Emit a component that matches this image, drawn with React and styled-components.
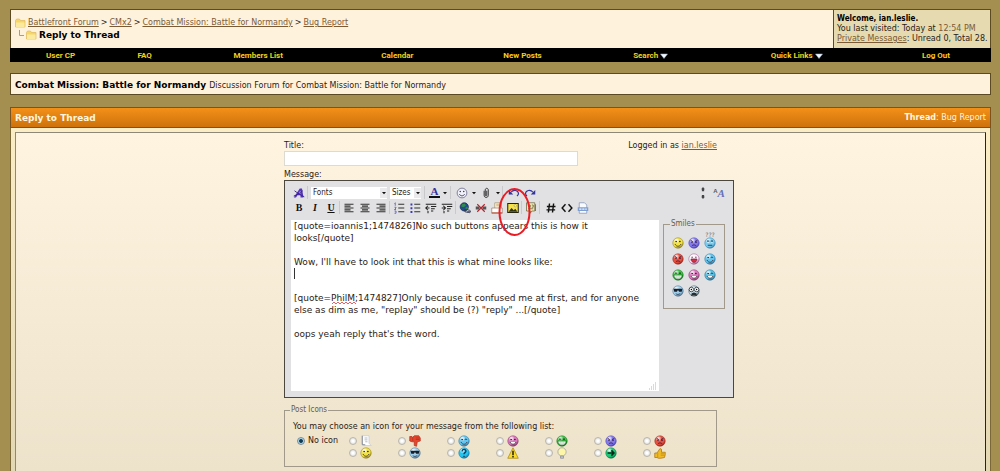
import React from "react";
import styled, { createGlobalStyle } from "styled-components";

const sans = '"DejaVu Sans", Verdana, sans-serif';
const condensed = '"DejaVu Sans Condensed", "DejaVu Sans", sans-serif';

const GlobalStyle = createGlobalStyle`
  * {
    box-sizing: border-box;
  }
  body {
    background: #a58f50;
    color: #2b2115;
    font-family: ${sans};
    font-size: 8px;
    line-height: 10px;
    margin: 0;
  }
  button,
  input,
  select,
  textarea {
    color: inherit;
    font-family: inherit;
    font-size: inherit;
    margin: 0;
  }
`;

const Page = styled.div`
  display: flex;
  flex-direction: column;
  min-height: 100vh;
  padding: 9px 9px 0 10px;
`;

const Header = styled.header`
  background: #fff2dc;
  border: 1px solid #5b4a22;
  border-bottom: 0;
  display: flex;
  height: 39px;
  justify-content: space-between;
`;

const Crumbs = styled.nav`
  padding: 7px 4px;
`;

const CrumbRow = styled.div`
  align-items: center;
  display: flex;
  gap: 2px;
  height: 12px;
`;

const Link = styled.a`
  color: #7b5b35;
  text-decoration: underline;
`;

const Heading = styled.h1`
  color: #000;
  font-size: 9px;
  line-height: 12px;
  margin: 0;
`;

const Welcome = styled.div`
  background: #e5dab0;
  border-left: 1px solid #5b4a22;
  flex: none;
  padding: 4px 0 0 3px;
  white-space: nowrap;
  width: 157px;
`;

const WelcomeName = styled.strong`
  color: #000;
  display: block;
  font-family: ${condensed};
`;

const Time = styled.span`
  color: #7b5b35;
`;

const NavBar = styled.nav`
  background: #000;
  display: grid;
  grid-template-columns: 101fr 67fr 160fr 118fr 132fr 124fr 168fr 110fr;
  height: 14px;
`;

const NavLink = styled.a`
  align-items: center;
  color: #f5cf1a;
  display: flex;
  font-family: Roboto, sans-serif;
  font-weight: 700;
  gap: 2px;
  justify-content: center;
  padding-top: 1px;
  text-decoration: none;
`;

const ForumBox = styled.section`
  align-items: baseline;
  background: #fff2dc;
  border: 1px solid #5b4a22;
  display: flex;
  gap: 3px;
  height: 22px;
  margin: 11px 0 12px;
  padding: 5px 4px 0;
`;

const TitleBar = styled.div`
  align-items: center;
  background: linear-gradient(#f39019, #ce720c);
  border: 1px solid #7a5320;
  color: #fff6df;
  display: flex;
  height: 21px;
  justify-content: space-between;
  padding: 0 4px;
`;

const BarTitle = styled.h2`
  font-size: 9px;
  margin: 0;
`;

const Panel = styled.main`
  background: linear-gradient(#fbedc6, #e3d8b4);
  border: 1px solid #7a6838;
  border-bottom: 0;
  border-top: 0;
  display: flex;
  flex: 1;
  flex-direction: column;
  padding: 4px 4px 0;
`;

const PanelInner = styled.div`
  background: linear-gradient(#fff4e0, #ede2ca);
  border: 1px solid #8d8878;
  border-bottom: 0;
  border-right: 1px solid #2c2415;
  flex: 1;
  padding-top: 8px;
`;

const Form = styled.form`
  margin: 0 auto;
  width: 433px;
`;

const FormTop = styled.div`
  display: flex;
  justify-content: space-between;
`;

const Label = styled.label`
  display: block;
`;

const TitleInput = styled.input`
  background: #fff;
  border: 1px solid #dcdad2;
  display: block;
  height: 15px;
  margin-bottom: 4px;
  width: 294px;
`;

const Editor = styled.div`
  background: #e1e1e3;
  border: 1px solid #4b463e;
  padding: 4px 6px 6px;
  position: relative;
  width: 450px;
`;

const ToolRow = styled.div`
  align-items: center;
  display: flex;
  height: 15px;
`;

const ToolButton = styled.button`
  align-items: center;
  background: none;
  border: 0;
  display: flex;
  height: 15px;
  justify-content: center;
  padding: 0;
  width: ${({ $popup }) => ($popup ? 24 : 16)}px;
`;

const Separator = styled.span`
  background: #c9c9cc;
  flex: none;
  height: 13px;
  margin-right: ${({ $wide }) => ($wide ? 3 : 1)}px;
  width: 1px;
`;

const SelectBox = styled.span`
  align-items: center;
  background: #fff;
  display: flex;
  height: 12px;
  margin-right: 3px;
  width: ${({ $width }) => $width}px;
`;

const Select = styled.select`
  appearance: none;
  background: none;
  border: 0;
  flex: 1;
  font-family: ${condensed};
  min-width: 0;
  outline: 0;
  padding: 0 2px;
`;

const SelectArrow = styled.span`
  align-items: center;
  background: #eaeaec;
  display: flex;
  height: 10px;
  justify-content: center;
  width: 7px;
`;

const ToolsRight = styled.div`
  display: flex;
  margin-left: auto;
`;

const EditArea = styled.div`
  align-items: flex-start;
  display: flex;
  gap: 4px;
  margin-top: 5px;
`;

const MessageWrap = styled.div`
  height: 171px;
  position: relative;
  width: 368px;
`;

const Message = styled.textarea`
  background: #fff;
  border: 0;
  display: block;
  font-size: 9px;
  height: 100%;
  line-height: 12px;
  outline: 0;
  overflow: hidden;
  padding: 0 3px;
  resize: none;
  width: 100%;
`;

const Caret = styled.span`
  background: #333;
  height: 11px;
  left: 3px;
  position: absolute;
  top: 48px;
  width: 1px;
`;

const Squiggle = styled.svg`
  left: 41px;
  position: absolute;
  top: 82px;
`;

const Grip = styled.svg`
  bottom: 1px;
  position: absolute;
  right: 2px;
`;

const Marker = styled.svg`
  left: 213px;
  pointer-events: none;
  position: absolute;
  top: 6px;
`;

const Fieldset = styled.fieldset`
  border: 1px solid #a19a8a;
  margin: 0;
  min-width: 0;
`;

const SmilieSet = styled(Fieldset)`
  height: 90px;
  margin-top: -1px;
  padding: 6px 6px 0;
  width: 62px;
`;

const Legend = styled.legend`
  color: #6b5c45;
  font-family: ${condensed};
  line-height: 10px;
  padding: 0 1px;
`;

const PostLegend = styled(Legend)`
  margin-left: -3px;
`;

const SmilieGrid = styled.div`
  display: grid;
  grid-auto-rows: 16px;
  grid-template-columns: repeat(3, 16px);
`;

const SmilieButton = styled.button`
  align-items: center;
  background: none;
  border: 0;
  display: flex;
  justify-content: center;
  padding: 0;
`;

const PostIcons = styled(Fieldset)`
  height: 62px;
  margin-top: 7px;
  padding: 7px 8px 0;
`;

const IconChoices = styled.div`
  display: grid;
  grid-template-columns: 56px 1fr;
  margin-top: 3px;
`;

const IconGrid = styled.div`
  display: grid;
  grid-auto-rows: 12px;
  grid-template-columns: repeat(7, 49px);
`;

const Choice = styled.label`
  align-items: center;
  display: flex;
  gap: 3px;
  height: 12px;
  padding-left: ${({ $first }) => ($first ? 4 : 0)}px;
`;

const Radio = styled.input`
  appearance: none;
  background: radial-gradient(circle, #fff 20%, #d2d2d0 100%);
  border: 1px solid #b9b6ad;
  border-radius: 50%;
  flex: none;
  height: 8px;
  width: 8px;
  &:checked {
    background: radial-gradient(circle, #123a52 35%, #a8d8ee 55%);
    border-color: #7d8c96;
  }
`;

const FolderIcon = () => (
    <svg width="11" height="10" viewBox="0 0 11 10">
        <path d="M.5 2.5 1.5 1h3l1 1.5h4.5v6.5H.5z" fill="#f6d766" stroke="#e0b95c" strokeWidth=".7" />
        <path d="M1 4.5h8.5V9H1z" fill="#fbe9a0" />
    </svg>
);

const BranchIcon = () => (
    <svg width="9" height="10" viewBox="0 0 9 10">
        <path d="M4.5 0v5.5H9" fill="none" stroke="#a79c86" />
    </svg>
);

const Arrow = () => (
    <svg width="4" height="4" viewBox="0 0 4 4">
        <path d="M0 1h4L2 3.3z" fill="#111" />
    </svg>
);

const MenuArrow = () => (
    <svg width="8" height="6" viewBox="0 0 8 6">
        <path d="M.5 1h7L4 5.5z" fill="#f2f8ff" stroke="#9fb6d0" strokeWidth=".5" />
    </svg>
);

const faces = {
    smile: ["#f2e342", "#93851a"],
    mad: ["#e8503e", "#a02a20"],
    confused: ["#8379ee", "#5048b4"],
    rolleyes: ["#7bcdf0", "#3a88b2"],
    tongue: ["#f9f0f6", "#a15a92"],
    wink: ["#62c6f0", "#2c7ca8"],
    biggrin: ["#3cc444", "#1a7a23"],
    embarrassed: ["#dc77be", "#8c3a72"],
    eek: ["#55c0e4", "#2c7494"],
    cool: ["#a0d0ec", "#4f7390"],
    nerd: ["#c6dae4", "#4d6068"],
    question: ["#22c4f0", "#137ba9"],
    arrow: ["#1cc878", "#0a7a48"],
};

const Features = ({ type }) => {
    if (type === "question") {
        return <path d="M5.5 6c0-4 5.5-3.5 5 0-.2 1.5-2.5 1.7-2.5 3.5M8 11.5v1.7" fill="none" stroke="#123955" strokeWidth="1.8" />;
    }
    if (type === "arrow") {
        return <path d="M3.5 8h8M8.5 4.5 12 8l-3.5 3.5" fill="none" stroke="#032b17" strokeWidth="2" />;
    }
    if (type === "cool") {
        return (
            <>
                <path d="M2 5h12l-1 4H9.5L8 6.5 6.5 9H3z" fill="#16202d" />
                <path d="M5 11.5c2 1.5 4 1.5 6-.5" fill="none" stroke="#203347" />
            </>
        );
    }
    if (type === "nerd") {
        return (
            <>
                <circle cx="4.5" cy="6" r="3" fill="#fff" stroke="#182027" />
                <circle cx="11.5" cy="6" r="3" fill="#fff" stroke="#182027" />
                <circle cx="4.5" cy="6" r="1" />
                <circle cx="11.5" cy="6" r="1" />
                <path d="M5 11l3-1 3 1 1 3.5-3-1H7l-3 1z" fill="#252d31" />
            </>
        );
    }
    if (type === "mad" || type === "confused") {
        return (
            <>
                <path d="m3.5 4.5 3 1.5M12.5 4.5 9.5 6M5 12c1.5-2 4.5-2 6 0" fill="none" stroke="#35183f" strokeWidth="1.1" />
                <circle cx="5.3" cy="7" r="1" fill="#251030" />
                <circle cx="10.7" cy="7" r="1" fill="#251030" />
            </>
        );
    }
    if (type === "biggrin") {
        return (
            <>
                <path d="M2.5 8h11c0 7.5-11 7.5-11 0z" fill="#fff" stroke="#115018" strokeWidth=".8" />
                <path d="M5.5 8.5v4M8 8.5v5M10.5 8.5v4" stroke="#4c9a54" strokeWidth=".6" />
                <path d="M4 5.5h3M9 5.5h3" stroke="#092f0e" strokeWidth="1.3" />
            </>
        );
    }
    if (type === "tongue") {
        return (
            <>
                <path d="M4 8h8c0 6-8 6-8 0z" fill="#d82e3f" stroke="#7f1c46" />
                <circle cx="5.5" cy="5.5" r="1" fill="#714061" />
                <circle cx="10.5" cy="5.5" r="1" fill="#714061" />
            </>
        );
    }
    if (type === "rolleyes") {
        return (
            <>
                <path d="M4 5.5h3M9 5.5h3M5 11h6" stroke="#164864" strokeWidth="1.4" />
                <path d="M4.5 7h2M9.5 7h2" stroke="#fff" />
            </>
        );
    }
    return (
        <>
            <circle cx="5.5" cy="6" r="1.1" fill="#221827" />
            {type === "wink" || type === "eek" ? (
                <path d="M9 6.5c1-1.5 2-1.5 3 0" fill="none" stroke="#102f45" strokeWidth="1.2" />
            ) : (
                <circle cx="10.5" cy="6" r="1.1" fill="#221827" />
            )}
            <path
                d="M4 9.3c1.5 4 6.5 4 8 0"
                fill={type === "eek" || type === "embarrassed" ? "#fff" : "none"}
                stroke="#40303c"
                strokeWidth="1.1"
            />
        </>
    );
};

const Face = ({ type }) => {
    const id = `${React.useId()}${type}`;
    const [fill, edge] = faces[type];

    return (
        <svg width="12" height="12" viewBox="0 0 16 16">
            <defs>
                <radialGradient id={id} cx="35%" cy="25%" r="75%">
                    <stop offset="0" stopColor="#fff" />
                    <stop offset=".4" stopColor={fill} />
                    <stop offset=".75" stopColor={fill} />
                    <stop offset="1" stopColor={edge} />
                </radialGradient>
            </defs>
            <circle cx="8" cy="8" r="7" fill={`url(#${id})`} stroke={edge} strokeWidth=".7" />
            <Features type={type} />
        </svg>
    );
};

const Dots = styled.span`
  color: #6b6f76;
  font-size: 6px;
  line-height: 4px;
  position: absolute;
  top: -4px;
`;

const DottedFace = styled.span`
  display: flex;
  justify-content: center;
  position: relative;
`;

const PostIcon = ({ type }) => {
    if (type === "page") {
        return (
            <svg width="12" height="12" viewBox="0 0 16 16">
                <path d="M3 1h9v10l3 3H6L3 12z" fill="#fff" stroke="#c8cad1" />
                <path d="M3 1v12h4" fill="none" stroke="#7b8392" strokeWidth="1.2" />
                <path d="M6 4h4M6 6.5h4M7 9h3" stroke="#9da5b3" />
            </svg>
        );
    }
    if (type === "down" || type === "up") {
        return (
            <svg width="12" height="12" viewBox="0 0 16 16">
                <path
                    d={
                        type === "down"
                            ? "M1 2h3l1 1 2-2h6l2 3v4l-4 1-1 6-3-1V9H4L1 8z"
                            : "M1 8h3l4-6 2 1v4h5v3l-1 4-5 1H6l-2-1H1z"
                    }
                    fill={type === "down" ? "#e4472e" : "#f0ba25"}
                    stroke={type === "down" ? "#b8341f" : "#aa7614"}
                />
                <path
                    d={type === "down" ? "M9 4h5M9 6h5M5 3v5" : "M9 9h5M9 11h5M5 8v6"}
                    stroke={type === "down" ? "#a62c1d" : "#b68014"}
                    strokeWidth=".8"
                />
            </svg>
        );
    }
    if (type === "warning") {
        return (
            <svg width="12" height="12" viewBox="0 0 16 16">
                <path d="m8 1 7 14H1z" fill="#fbdc28" stroke="#aa8912" strokeLinejoin="round" />
                <path d="M8 5v6M8 12v2" stroke="#251e06" strokeWidth="2" />
            </svg>
        );
    }
    if (type === "bulb") {
        return (
            <svg width="12" height="12" viewBox="0 0 16 16">
                <circle cx="8" cy="6.5" r="5.5" fill="#fdf6a8" stroke="#a9a9a4" strokeWidth="1.2" />
                <path d="M6 12h4v3H6z" fill="#c3c5cc" stroke="#8d8e99" />
            </svg>
        );
    }
    return <Face type={type} />;
};

// toolbar glyphs share a 16 unit grid
const glyphs = {
    removeFormat: (
        <>
            <path d="m1 14 8-12h3l2 12h-4v-3H6l-2 3zM7.5 8.5H10L9.8 5z" fill="#5636c0" fillRule="evenodd" />
            <path d="M2 5c4 3 8 6 13 8M13 5C9 8 5 11 1 12" fill="none" stroke="#352080" strokeWidth="1.2" />
        </>
    ),
    left: <path d="M2 3h12M2 5.5h8M2 8h12M2 10.5h8M2 13h12" stroke="#333" strokeWidth="1.4" />,
    center: <path d="M2 3h12M4 5.5h8M2 8h12M4 10.5h8M2 13h12" stroke="#333" strokeWidth="1.4" />,
    right: <path d="M2 3h12M6 5.5h8M2 8h12M6 10.5h8M2 13h12" stroke="#333" strokeWidth="1.4" />,
    numbered: (
        <>
            <path d="M3 1v4M2 2l1-1M2 7h2v1L2 10h2M2 12h2v3H2" fill="none" stroke="#4a4ab8" />
            <path d="M7 3h8M7 8h8M7 13h8" stroke="#333" strokeWidth="1.4" />
        </>
    ),
    bullets: (
        <>
            <path d="M2 2h2.5v2.5H2zM2 7h2.5v2.5H2zM2 12h2.5v2.5H2z" fill="#3939b4" />
            <path d="M7 3h8M7 8h8M7 13h8" stroke="#333" strokeWidth="1.4" />
        </>
    ),
    outdent: (
        <>
            <path d="M1 3h14M8 6h7M8 9h5M8 12h3M4 12v3" stroke="#222" strokeWidth="1.4" />
            <path d="M1 8h5M4 5 1 8l3 3" fill="none" stroke="#222" strokeWidth="1.4" />
        </>
    ),
    indent: (
        <>
            <path d="M1 3h14M8 6h7M8 9h5M8 12h3M4 12v3" stroke="#222" strokeWidth="1.4" />
            <path d="M1 8h5M3 5l3 3-3 3" fill="none" stroke="#222" strokeWidth="1.4" />
        </>
    ),
    link: (
        <>
            <circle cx="7" cy="6.5" r="5.5" fill="#1f4f8e" stroke="#172a52" />
            <path d="M4 3l4-1 1 3-3 2-3-1zM8 8l3-2 1 2-2 3z" fill="#308c49" />
            <path d="M7 11h3M11 13h4M8 13c-2-2 0-4 2-3l4 1c3 1 1 4-1 3z" fill="none" stroke="#333c55" strokeWidth="1.3" />
        </>
    ),
    unlink: (
        <>
            <path d="M1 8h5M10 8h5" stroke="#555" strokeWidth="4" />
            <path d="m3 3 10 10M13 3 3 13" stroke="#b3242b" strokeWidth="1.5" />
        </>
    ),
    email: (
        <>
            <path d="M5 1h9v9H5z" fill="#fbf3d7" stroke="#a99673" />
            <path d="M1 8h14v7H1z" fill="#fff" stroke="#a1816b" />
            <path d="M1 14.5h14" stroke="#b25c42" strokeWidth="1.5" />
            <path d="M7 3h5M7 5h5" stroke="#c79d65" />
        </>
    ),
    image: (
        <>
            <path d="M1 2h14v12H1z" fill="#f6e34c" stroke="#252510" strokeWidth="1.4" />
            <path d="m2 13 4-5 3 3 2-2 3 4z" fill="#2d3214" />
            <circle cx="11" cy="5" r="1.5" fill="#fff" stroke="#7b7521" strokeWidth=".6" />
        </>
    ),
    quote: (
        <>
            <path d="M2 1h11v11H9l-2 3v-3H2z" fill="#f4ecaf" stroke="#6b6342" />
            <path d="M5 4h2v3H5M9 4h2v3H9M4 9h7M14 3v9" fill="none" stroke="#5f593b" />
        </>
    ),
    hash: <path d="M6 2 4.5 14M11.5 2 10 14M2.5 6H14M2 10.5h11.5" stroke="#111" strokeWidth="1.9" />,
    code: <path d="M6 3 1.5 8 6 13M10 3l4.5 5-4.5 5" fill="none" stroke="#111" strokeWidth="1.9" />,
    php: (
        <>
            <path d="M3 1h7l3 3v11H3z" fill="#f8fbff" stroke="#8294b8" />
            <path d="M1 7h14v5H1z" fill="#7e9fcf" />
            <path d="M3 9.5h10" stroke="#eff5ff" strokeDasharray="3 1" strokeWidth="1.6" />
        </>
    ),
    smilie: (
        <>
            <circle cx="8" cy="8" r="6.5" fill="#f0f0f8" stroke="#747493" strokeWidth="1.2" />
            <circle cx="5.7" cy="6" r="1" fill="#33335c" />
            <circle cx="10.3" cy="6" r="1" fill="#33335c" />
            <path d="M4.5 9.5c1.5 3 5.5 3 7 0" fill="none" stroke="#33335c" strokeWidth="1.2" />
        </>
    ),
    clip: <path d="M5.5 5v6c0 4 5.5 4 5.5 0V4c0-3-4-3-4 0v7c0 1.5 2 1.5 2 0V5" fill="none" stroke="#333" strokeWidth="1.3" />,
    undo: (
        <>
            <path d="M4 7c3-4 10-3 10 2 0 1-1 2-2 3" fill="none" stroke="#3434a0" strokeWidth="1.5" />
            <path d="M1 4v6h6z" fill="#3434a0" />
        </>
    ),
    redo: (
        <>
            <path d="M12 7C9 3 2 4 2 9c0 1 1 2 2 3" fill="none" stroke="#3434a0" strokeWidth="1.5" />
            <path d="M15 4v6H9z" fill="#3434a0" />
        </>
    ),
    resize: <path d="M8 0l2.5 3h-5zM6.5 3h3v2.5h-3zM8 16l2.5-3h-5zM6.5 10.5h3V13h-3z" fill="#444" />,
};

const Glyph = ({ name }) => (
    <svg width="12" height="12" viewBox="0 0 16 16">
        {glyphs[name]}
    </svg>
);

const Letter = styled.span`
  color: #111;
  font-family: "Liberation Serif", serif;
  font-size: 10px;
  font-style: ${({ $italic }) => ($italic ? "italic" : "normal")};
  font-weight: 700;
  text-decoration: ${({ $underline }) => ($underline ? "underline" : "none")};
`;

const ColourLetter = styled.span`
  border-bottom: 2px solid #111;
  color: #33339c;
  font-family: "Liberation Serif", serif;
  font-size: 11px;
  font-weight: 700;
  line-height: 9px;
  margin-right: 3px;
  padding: 0 2px;
`;

const ModeLetters = styled.span`
  align-items: flex-start;
  color: #555;
  display: flex;
  font-family: "Liberation Sans", sans-serif;
  font-size: 6px;
  font-weight: 700;
  line-height: 8px;
`;

const ModeBig = styled.span`
  color: #6870b8;
  font-family: "Liberation Serif", serif;
  font-size: 11px;
  font-style: italic;
  line-height: 12px;
`;

const Spacer = styled.span`
  width: 4px;
`;

const Tool = ({ name, label, popup }) => (
    <ToolButton type="button" aria-label={label || name} $popup={popup}>
        <Glyph name={name} />
        {popup && (
            <>
                <Spacer />
                <Arrow />
            </>
        )}
    </ToolButton>
);

const smilies = [
    "smile",
    "confused",
    "rolleyes",
    "mad",
    "tongue",
    "wink",
    "biggrin",
    "embarrassed",
    "eek",
    "cool",
    "nerd",
];

const postIcons = [
    "page",
    "down",
    "wink",
    "embarrassed",
    "biggrin",
    "confused",
    "mad",
    "smile",
    "cool",
    "question",
    "warning",
    "bulb",
    "arrow",
    "up",
];

const message = `[quote=ioannis1;1474826]No such buttons appears this is how it
looks[/quote]

Wow, I'll have to look int that this is what mine looks like:


[quote=PhilM;1474827]Only because it confused me at first, and for anyone
else as dim as me, "replay" should be (?) "reply" ...[/quote]

oops yeah reply that's the word.`;

const Toolbar = () => (
    <>
        <ToolRow>
            <Tool name="removeFormat" label="Remove formatting" />
            <Separator $wide />
            <SelectBox $width={76}>
                <Select aria-label="Fonts">
                    <option>Fonts</option>
                </Select>
                <SelectArrow>
                    <Arrow />
                </SelectArrow>
            </SelectBox>
            <SelectBox $width={31}>
                <Select aria-label="Sizes">
                    <option>Sizes</option>
                </Select>
                <SelectArrow>
                    <Arrow />
                </SelectArrow>
            </SelectBox>
            <Separator />
            <ToolButton type="button" aria-label="Text colour" $popup>
                <ColourLetter>A</ColourLetter>
                <Arrow />
            </ToolButton>
            <Separator $wide />
            <Tool name="smilie" popup />
            <Tool name="clip" label="Attachments" popup />
            <Separator $wide />
            <Tool name="undo" />
            <Tool name="redo" />
            <ToolsRight>
                <Tool name="resize" label="Resize editor" />
                <ToolButton type="button" aria-label="Switch editor mode">
                    <ModeLetters>
                        A<ModeBig>A</ModeBig>
                    </ModeLetters>
                </ToolButton>
            </ToolsRight>
        </ToolRow>
        <ToolRow>
            <ToolButton type="button" aria-label="Bold">
                <Letter>B</Letter>
            </ToolButton>
            <ToolButton type="button" aria-label="Italic">
                <Letter $italic>I</Letter>
            </ToolButton>
            <ToolButton type="button" aria-label="Underline">
                <Letter $underline>U</Letter>
            </ToolButton>
            <Separator />
            <Tool name="left" />
            <Tool name="center" />
            <Tool name="right" />
            <Separator />
            <Tool name="numbered" />
            <Tool name="bullets" />
            <Tool name="outdent" />
            <Tool name="indent" />
            <Separator />
            <Tool name="link" />
            <Tool name="unlink" />
            <Tool name="email" />
            <Tool name="image" />
            <Separator />
            <Tool name="quote" />
            <Separator $wide />
            <Tool name="hash" />
            <Tool name="code" />
            <Tool name="php" />
        </ToolRow>
    </>
);

const App = () => (
    <Page>
        <GlobalStyle />
        <Header>
            <Crumbs>
                <CrumbRow>
                    <FolderIcon />
                    <Link href="#forum">Battlefront Forum</Link>&gt;
                    <Link href="#cmx2">CMx2</Link>&gt;
                    <Link href="#normandy">Combat Mission: Battle for Normandy</Link>&gt;
                    <Link href="#bugs">Bug Report</Link>
                </CrumbRow>
                <CrumbRow>
                    <BranchIcon />
                    <FolderIcon />
                    <Heading>Reply to Thread</Heading>
                </CrumbRow>
            </Crumbs>
            <Welcome>
                <WelcomeName>Welcome, ian.leslie.</WelcomeName>
                You last visited: Today at <Time>12:54 PM</Time>
                <br />
                <Link href="#messages">Private Messages</Link>: Unread 0, Total 28.
            </Welcome>
        </Header>
        <NavBar>
            <NavLink href="#usercp">User CP</NavLink>
            <NavLink href="#faq">FAQ</NavLink>
            <NavLink href="#members">Members List</NavLink>
            <NavLink href="#calendar">Calendar</NavLink>
            <NavLink href="#new">New Posts</NavLink>
            <NavLink href="#search">
                Search <MenuArrow />
            </NavLink>
            <NavLink href="#links">
                Quick Links <MenuArrow />
            </NavLink>
            <NavLink href="#logout">Log Out</NavLink>
        </NavBar>
        <ForumBox>
            <Heading as="h2">Combat Mission: Battle for Normandy</Heading>
            <span>Discussion Forum for Combat Mission: Battle for Normandy</span>
        </ForumBox>
        <TitleBar>
            <BarTitle>Reply to Thread</BarTitle>
            <span>
                <b>Thread</b>: Bug Report
            </span>
        </TitleBar>
        <Panel>
            <PanelInner>
                <Form>
                    <FormTop>
                        <Label htmlFor="title">Title:</Label>
                        <span>
                            Logged in as <Link href="#profile">ian.leslie</Link>
                        </span>
                    </FormTop>
                    <TitleInput id="title" type="text" />
                    <Label htmlFor="message">Message:</Label>
                    <Editor>
                        <Toolbar />
                        <EditArea>
                            <MessageWrap>
                                <Message id="message" spellCheck={false} defaultValue={message} />
                                <Caret />
                                <Squiggle width="26" height="3" viewBox="0 0 26 3">
                                    <path
                                        d="M0 2l2-2 2 2 2-2 2 2 2-2 2 2 2-2 2 2 2-2 2 2 2-2 2 2"
                                        fill="none"
                                        stroke="#e23b3b"
                                        strokeWidth=".8"
                                    />
                                </Squiggle>
                                <Grip width="8" height="8" viewBox="0 0 8 8">
                                    <path
                                        d="M6 1h1M4 3h1M6 3h1M2 5h1M4 5h1M6 5h1M0 7h1M2 7h1M4 7h1M6 7h1"
                                        stroke="#b5b5b5"
                                    />
                                </Grip>
                            </MessageWrap>
                            <SmilieSet>
                                <Legend>Smiles</Legend>
                                <SmilieGrid>
                                    {smilies.map((type) => (
                                        <SmilieButton key={type} type="button" aria-label={type}>
                                            <DottedFace>
                                                {type === "rolleyes" && <Dots>???</Dots>}
                                                <Face type={type} />
                                            </DottedFace>
                                        </SmilieButton>
                                    ))}
                                </SmilieGrid>
                            </SmilieSet>
                        </EditArea>
                        <Marker width="33" height="50" viewBox="0 0 33 50">
                            <ellipse cx="16.5" cy="25" rx="15" ry="23" fill="none" stroke="#ea1c24" strokeWidth="2" />
                        </Marker>
                    </Editor>
                    <PostIcons>
                        <PostLegend>Post Icons</PostLegend>
                        You may choose an icon for your message from the following list:
                        <IconChoices>
                            <Choice $first>
                                <Radio type="radio" name="icon" defaultChecked />
                                No icon
                            </Choice>
                            <IconGrid>
                                {postIcons.map((type) => (
                                    <Choice key={type}>
                                        <Radio type="radio" name="icon" aria-label={type} />
                                        <PostIcon type={type} />
                                    </Choice>
                                ))}
                            </IconGrid>
                        </IconChoices>
                    </PostIcons>
                </Form>
            </PanelInner>
        </Panel>
    </Page>
);

export default App;
